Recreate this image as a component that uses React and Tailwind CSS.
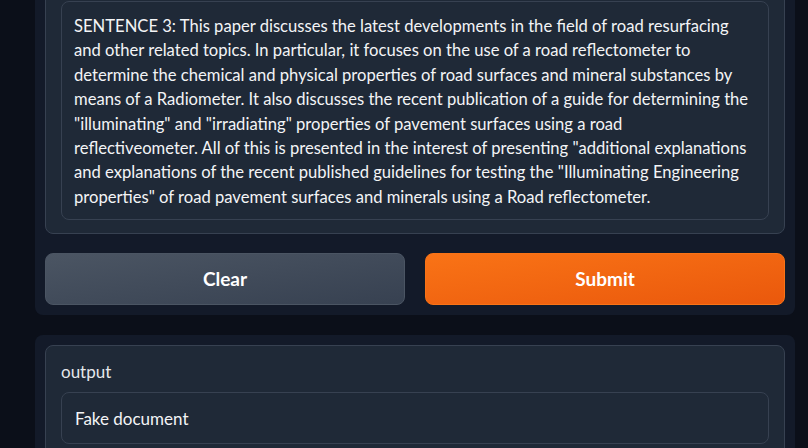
import React from 'react';

const lines = [
  'SENTENCE 3: This paper discusses the latest developments in the field of road resurfacing',
  'and other related topics. In particular, it focuses on the use of a road reflectometer to',
  'determine the chemical and physical properties of road surfaces and mineral substances by',
  'means of a Radiometer. It also discusses the recent publication of a guide for determining the',
  '"illuminating" and "irradiating" properties of pavement surfaces using a road',
  'reflectiveometer. All of this is presented in the interest of presenting "additional explanations',
  'and explanations of the recent published guidelines for testing the "Illuminating Engineering',
  'properties" of road pavement surfaces and minerals using a Road reflectometer.',
];

const App = () => {
  return (
    <div
      className="h-[448px] overflow-hidden bg-[#0b0f19] pl-[35px] pr-[13px] text-[#f3f4f6]"
      style={{ fontFamily: 'Lato, "Noto Sans", sans-serif' }}
    >
      {/* Input panel */}
      <div className="-mt-[38px] rounded-b-lg bg-[#131a29] px-[10px] pb-[10px] pt-[10px]">
        <div className="rounded-lg border border-[#374151] bg-[#1f2937] px-[15px] pb-[13px] pt-[28px]">
          <div className="rounded-lg border border-[#374151] bg-[#1f2937] px-[12px] pb-[10px] pt-[12px] text-[16.6px] leading-[24.4px]">
            {lines.map((line, i) => (
              <div key={i} className="whitespace-nowrap">
                {line}
              </div>
            ))}
          </div>
        </div>

        {/* Actions */}
        <div className="mt-[19px] flex gap-[20px]">
          <button className="h-[52px] flex-1 rounded-lg border border-[#4b5563] bg-gradient-to-br from-[#4b5563] to-[#374151] text-[19px] font-bold text-white">
            Clear
          </button>
          <button className="h-[52px] flex-1 rounded-lg border border-[#f97316] bg-gradient-to-br from-[#f97316] to-[#ea580c] text-[19px] font-bold text-white">
            Submit
          </button>
        </div>
      </div>

      {/* Output panel */}
      <div className="mt-[20px] rounded-lg bg-[#131a29] p-[10px]">
        <div className="rounded-lg border border-[#374151] bg-[#1f2937] px-[15px] pb-[16px] pt-[14px]">
          <div className="text-[17px] leading-[24px] text-[#e5e7eb]">output</div>
          <div className="mt-[8px] flex h-[52px] items-center rounded-lg border border-[#374151] bg-[#1f2937] px-[13px] text-[17px]">
            Fake document
          </div>
        </div>
      </div>
    </div>
  );
};

export default App;
